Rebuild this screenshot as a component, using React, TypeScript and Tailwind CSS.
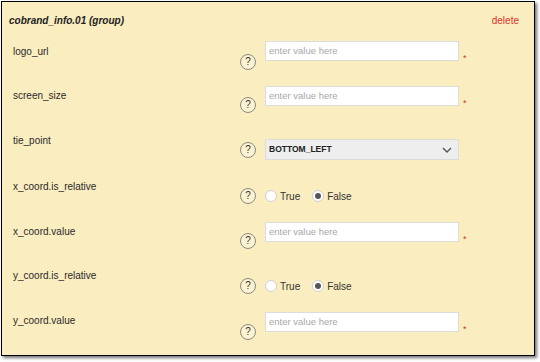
import React from "react";

const Help = ({ mt }: { mt: string }) => (
  <div
    className={`${mt} w-[16px] h-[16px] shrink-0 rounded-full border border-[#8c8a80] bg-[#fcf3d2] flex items-center justify-center text-[10px] leading-none text-[#333]`}
  >
    ?
  </div>
);

const TextInput = ({ mt }: { mt: string }) => (
  <div className={`${mt} flex items-start ml-[9px]`}>
    <div className="w-[194px] h-[20px] bg-white border border-[#dcdcd8] flex items-center pl-[3px] text-[9.5px] text-[#a9a9a9]">
      enter value here
    </div>
    <span className="ml-[4px] mt-[13px] text-[9px] leading-none text-[#d8322a]">*</span>
  </div>
);

const Radios = ({ mt }: { mt: string }) => (
  <div className={`${mt} ml-[9px] flex items-center h-[16px] text-[10px] text-[#333]`}>
    <span className="w-[12px] h-[12px] rounded-full bg-white border border-[#cfcfcf]" />
    <span className="ml-[3px]">True</span>
    <span className="ml-[12px] w-[12px] h-[12px] rounded-full bg-white border border-[#cfcfcf] flex items-center justify-center">
      <span className="w-[6px] h-[6px] rounded-full bg-[#555]" />
    </span>
    <span className="ml-[3px]">False</span>
  </div>
);

const Select = ({ mt }: { mt: string }) => (
  <div
    className={`${mt} ml-[9px] w-[194px] h-[21px] bg-[#eeeeee] border border-[#dcdcd8] flex items-center justify-between pl-[3px] pr-[6px]`}
  >
    <span className="text-[8.5px] font-bold text-[#222]">BOTTOM_LEFT</span>
    <svg width="10" height="6" viewBox="0 0 10 6">
      <path d="M1 1 L5 5 L9 1" fill="none" stroke="#555" strokeWidth="1.4" />
    </svg>
  </div>
);

export default function App() {
  return (
    <div className="w-[540px] h-[362px] bg-white pl-[1px] pt-[1px]" style={{ fontFamily: '"Liberation Sans", Arial, sans-serif' }}>
      <div className="w-[534px] h-[355px] bg-[#faedc0] border border-black shadow-[2px_2px_3px_rgba(0,0,0,0.55)] flex flex-col">
        <div className="flex justify-between items-start pl-[7px] pr-[15px] pt-[13px] h-[38px]">
          <span className="text-[10px] leading-[12px] font-bold italic text-[#222]">cobrand_info.01 (group)</span>
          <span className="text-[10px] leading-[12px] text-[#d8322a]">delete</span>
        </div>
        {/* row 1 */}
        <div className="flex items-start h-[44px] pl-[11px]">
          <div className="w-[227px] mt-[6px] text-[10px] leading-[12px] text-[#2a2a2a]">logo_url</div>
          <Help mt="mt-[14px]" />
          <TextInput mt="mt-[1px]" />
        </div>
        {/* row 2 */}
        <div className="flex items-start h-[44px] pl-[11px]">
          <div className="w-[227px] mt-[6px] text-[10px] leading-[12px] text-[#2a2a2a]">screen_size</div>
          <Help mt="mt-[13px]" />
          <TextInput mt="mt-[2px]" />
        </div>
        {/* row 3 */}
        <div className="flex items-start h-[47px] pl-[11px]">
          <div className="w-[227px] mt-[7px] text-[10px] leading-[12px] text-[#2a2a2a]">tie_point</div>
          <Help mt="mt-[14px]" />
          <Select mt="mt-[11px]" />
        </div>
        {/* row 4 */}
        <div className="flex items-start h-[45px] pl-[11px]">
          <div className="w-[227px] mt-[6px] text-[10px] leading-[12px] text-[#2a2a2a]">x_coord.is_relative</div>
          <Help mt="mt-[13px]" />
          <Radios mt="mt-[13px]" />
        </div>
        {/* row 5 */}
        <div className="flex items-start h-[44px] pl-[11px]">
          <div className="w-[227px] mt-[6px] text-[10px] leading-[12px] text-[#2a2a2a]">x_coord.value</div>
          <Help mt="mt-[13px]" />
          <TextInput mt="mt-[2px]" />
        </div>
        {/* row 6 */}
        <div className="flex items-start h-[45px] pl-[11px]">
          <div className="w-[227px] mt-[6px] text-[10px] leading-[12px] text-[#2a2a2a]">y_coord.is_relative</div>
          <Help mt="mt-[14px]" />
          <Radios mt="mt-[14px]" />
        </div>
        {/* row 7 */}
        <div className="flex items-start h-[42px] pl-[11px]">
          <div className="w-[227px] mt-[6px] text-[10px] leading-[12px] text-[#2a2a2a]">y_coord.value</div>
          <Help mt="mt-[15px]" />
          <TextInput mt="mt-[3px]" />
        </div>
      </div>
    </div>
  );
}
